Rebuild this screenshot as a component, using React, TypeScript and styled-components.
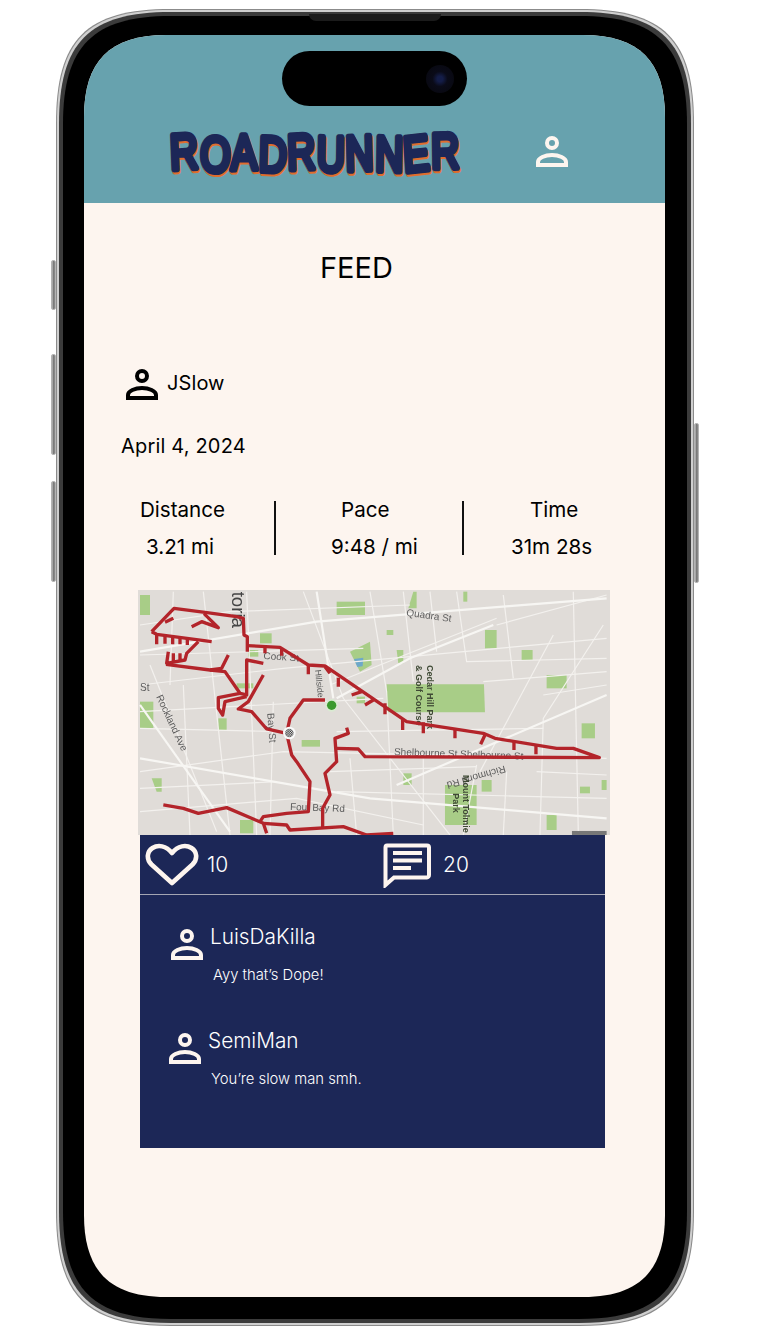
import styled, { createGlobalStyle } from 'styled-components';

const GlobalStyle = createGlobalStyle`
  html, body {
    margin: 0;
    padding: 0;
    background: #fff;
    font-family: "Inter", "Liberation Sans", sans-serif;
  }
  body {
    width: 778px;
    height: 1336px;
    overflow: hidden;
  }
`;

// rounded rect whose corners ease in slowly, like the device mockup (c pulls the curve towards the corner)
const squircle = (x: number, y: number, w: number, h: number, r: number, c: number) => {
  const R = x + w;
  const B = y + h;
  return [
    `M${x} ${y + r}C${x} ${y + c} ${x + c} ${y} ${x + r} ${y}`,
    `H${R - r}C${R - c} ${y} ${R} ${y + c} ${R} ${y + r}`,
    `V${B - r}C${R} ${B - c} ${R - c} ${B} ${R - r} ${B}`,
    `H${x + r}C${x + c} ${B} ${x} ${B - c} ${x} ${B - r}Z`,
  ].join('');
};

const PHONE_W = 638;
const PHONE_H = 1317;

// Device frame
const Page = styled.div`
  width: 778px;
  height: 1336px;
  padding: 9px 0 0 56px;
  box-sizing: border-box;
`;

const Phone = styled.div`
  position: relative;
  width: ${PHONE_W}px;
  height: ${PHONE_H}px;
  box-sizing: border-box;
  padding: 26px 29px 29px 28px;
`;

const FrameArt = styled.svg`
  position: absolute;
  top: 0;
  left: 0;
`;

const SideButton = styled.div<{ $side: 'left' | 'right'; $top: number; $height: number }>`
  position: absolute;
  ${p => p.$side}: -5px;
  top: ${p => p.$top}px;
  width: 5px;
  height: ${p => p.$height}px;
  background: linear-gradient(90deg, #bdbdbd, #6d6d6d 60%, #9a9a9a);
  border: 1px solid #b4b4b4;
  border-radius: 2px;
  box-sizing: border-box;
`;

const Speaker = styled.div`
  position: absolute;
  top: 5px;
  left: 253px;
  width: 132px;
  height: 7px;
  background: #1b1b1b;
  border-radius: 0 0 8px 8px;
`;

const Screen = styled.div`
  position: relative;
  height: 100%;
  background: #fdf5ef;
  clip-path: path('${squircle(0, 0, 581, 1262, 82, 26)}');
`;

const Island = styled.div`
  position: absolute;
  top: 16px;
  left: 198px;
  width: 185px;
  height: 55px;
  display: flex;
  align-items: center;
  justify-content: flex-end;
  padding-right: 13px;
  box-sizing: border-box;
  background: #000;
  border-radius: 28px;
`;

const Lens = styled.div`
  width: 28px;
  height: 28px;
  border-radius: 50%;
  background: radial-gradient(circle, #141d48 0 14%, #0a0b18 38%, #07070d 100%);
`;

// Header
const Header = styled.header`
  height: 168px;
  box-sizing: border-box;
  padding: 91px 0 23px 84px;
  display: flex;
  align-items: center;
  background: #67a2ae;
`;

const LogoArt = styled.svg`
  display: block;
  flex: none;
  overflow: visible;
`;

const HeaderAction = styled.div`
  margin-left: 71px;
  padding-bottom: 6px;
  display: flex;
`;

// Feed
const Feed = styled.main`
  display: flex;
  flex-direction: column;
`;

const Title = styled.h1`
  margin: 48px 0 0 236px;
  font-size: 29px;
  line-height: 33px;
  font-weight: 400;
  color: #000;
`;

const Author = styled.div`
  margin: 81px 0 0 41px;
  height: 36px;
  display: flex;
  align-items: center;
  gap: 8px;
  font-size: 20px;
  letter-spacing: 0.1px;
  color: #000;
`;

const PostDate = styled.div`
  margin: 33px 0 0 37px;
  font-size: 20px;
  letter-spacing: 0.18px;
  line-height: 24px;
  color: #000;
`;

const Stats = styled.div`
  margin-top: 40px;
  display: flex;
  align-items: center;
  height: 60px;
`;

const Stat = styled.div<{ $width: number }>`
  width: ${p => p.$width}px;
  display: flex;
  flex-direction: column;
  gap: 13px;
  font-size: 20.6px;
  line-height: 24px;
  color: #000;
`;

const StatText = styled.span<{ $inset: number }>`
  padding-left: ${p => p.$inset}px;
`;

const StatDivider = styled.div`
  width: 2px;
  height: 54px;
  background: #111;
`;

const MapFrame = styled.div`
  margin: 32px 0 0 54px;
  width: 472px;
  height: 245px;
  background: #e0dcd8;
  overflow: hidden;
`;

const MapSvg = styled.svg`
  display: block;
  filter: blur(0.55px);
`;

const Panel = styled.section`
  margin-left: 56px;
  width: 465px;
  height: 313px;
  background: #1c2757;
  color: #fff;
`;

const Actions = styled.div`
  height: 60px;
  box-sizing: border-box;
  display: flex;
  border-bottom: 1px solid #a3a5b3;
`;

const Action = styled.div<{ $width: number; $inset: number; $gap: number }>`
  width: ${p => p.$width}px;
  padding-left: ${p => p.$inset}px;
  box-sizing: border-box;
  display: flex;
  align-items: center;
  gap: ${p => p.$gap}px;
  font-size: 21px;
  font-weight: 300;
`;

const Comment = styled.div<{ $top: number; $inset: number }>`
  margin: ${p => p.$top}px 0 0 ${p => p.$inset}px;
  display: grid;
  grid-template-columns: 34px 1fr;
  grid-template-rows: 24px auto;
  column-gap: 6px;
  row-gap: 18px;
`;

const CommentIcon = styled.div`
  grid-row: 1 / span 2;
  padding-top: 1px;
`;

const CommentName = styled.div`
  font-size: 20.8px;
  font-weight: 300;
  line-height: 24px;
`;

const CommentBody = styled.div`
  grid-column: 2;
  margin-left: 3px;
  font-size: 14.8px;
  font-weight: 300;
  line-height: 17px;
`;

const PersonIcon = ({ size = 34, color = '#000' }: { size?: number; color?: string }) => (
  <svg width={size} height={size} viewBox="0 0 34 34" fill="none" stroke={color} strokeWidth="4">
    <circle cx="17" cy="10" r="5" />
    <path d="M3 32V29C3 25 10 22 17 22S31 25 31 29V32Z" />
  </svg>
);

const HeartIcon = () => (
  <svg width="54" height="44" viewBox="0 0 54 44" fill="none" stroke="#fdf5ef" strokeWidth="4.6">
    <path d="M27 40L6.5 21.5C1 16 2 8.5 7.5 5C13 1.5 21 2.5 27 10C33 2.5 41 1.5 46.5 5C52 8.5 53 16 47.5 21.5Z" strokeLinejoin="round" />
  </svg>
);

const ChatIcon = () => (
  <svg width="48" height="46" viewBox="0 0 48 46" fill="none">
    <path d="M4 3.5H44C45.5 3.5 46 4.5 46 5.5V33C46 34.5 45 35.5 44 35.5H11L2.5 43V5.5C2.5 4.5 3 3.5 4 3.5Z" stroke="#fdf5ef" strokeWidth="4" />
    <path d="M10 11H39M10 18.5H39M10 26H28" stroke="#fdf5ef" strokeWidth="4.2" />
  </svg>
);

const LOGO_TILT = '-3 2 -1 2 -2 1 -2 1 -5 -1';
const LOGO_LIFT = '0 1 -1 1 -1 1 0 0 1 -3';

// brush lettering: the same text twice, orange under navy
const Logo = () => (
  <LogoArt width="296" height="54" viewBox="0 -4 296 54" fontFamily="'Liberation Sans', sans-serif" fontSize="39">
    <g strokeLinejoin="round" strokeLinecap="round" strokeWidth="4.6" transform="scale(1 1.28)">
      <text x="3.5" y="32.6" dy={LOGO_LIFT} rotate={LOGO_TILT} textLength="289" fill="#df6d2d" stroke="#df6d2d">ROADRUNNER</text>
      <text x="2.5" y="31" dy={LOGO_LIFT} rotate={LOGO_TILT} textLength="289" fill="#1c2757" stroke="#1c2757">ROADRUNNER</text>
    </g>
  </LogoArt>
);

// road network and parks, coordinates taken from the 3x crop of the map
const minorRoads = [
  'M30 300L460 250L1430 160', 'M30 560L460 500L1430 520', 'M30 120L300 80L840 60', 'M220 20L300 750',
  'M520 20L640 340L960 750', 'M720 20L770 320L790 750', 'M980 20L1010 230L1430 220', 'M30 430L450 440',
  'M620 620L1430 640', 'M1230 750L1240 400L1420 120', 'M1050 560L1270 150', 'M60 240L260 740',
  'M430 350L420 750', 'M30 680L500 640L880 720', 'M1100 120L1430 30', 'M600 300L1100 100',
  'M1040 540L1000 750', 'M130 20L120 300', 'M900 20L920 200', 'M1130 560L1120 750',
  'M30 210L700 190', 'M30 380L760 340', 'M30 610L440 590', 'M620 440L1240 430', 'M820 20L850 290',
  'M1330 20L1345 740', 'M1120 30L1150 280', 'M350 20L380 750', 'M660 520L680 750', 'M880 520V750',
  'M1220 560L1430 570', 'M160 300L180 750', 'M1240 330L1430 300', 'M600 560L1040 545', 'M1060 290L1430 260',
];

const majorRoads = [
  'M30 200L560 110L1430 40', 'M560 20L610 340', 'M30 520L720 640L1430 700', 'M620 340L840 220L1090 120',
  'M800 600L1430 330', 'M30 360L300 740',
];

const parks = [
  'M770 298H1062L1065 382H770Z', 'M620 50H705V90H620Z', 'M660 200L720 170L725 240L690 260Z', 'M1065 135H1100V190H1065Z',
  'M945 600H1040V720H945Z', 'M1250 270H1310V310H1250Z', 'M1175 195H1208V225H1175Z', 'M850 20H860V70H835Z',
  'M390 145H425V175H390Z', 'M30 350H70V430H30Z', 'M515 465H570V485H515Z', 'M1355 415H1395V460H1355Z',
  'M1055 585H1085V620H1055Z', 'M1250 690H1280V735H1250Z', 'M1350 605H1380V625H1350Z', 'M330 705H370V745H330Z',
  'M30 30H60V90H30Z', 'M265 400H290V435H265Z', 'M820 565H845V600H820Z', 'M1415 585H1430V615H1415Z',
  'M800 195H820V235H805Z', 'M355 195H385V215H355Z', 'M320 295H370V310H320Z', 'M770 135H790V150H770Z',
  'M1000 20H1012V50H1000Z', 'M65 580H95V620H80Z', 'M680 335H705V355H680Z',
];

const routes = [
  'M65 140L132 70L225 82L320 95L340 100L342 150L352 155L352 200',
  'M65 140L80 148L245 170',
  'M80 148V178M105 152V176M128 155V178M150 158V178M172 160V180',
  'M105 112L130 100M185 125L215 110L265 128L222 86',
  'M205 170L170 205L165 225L110 235L115 200M130 205V228M150 205V225',
  'M108 238L240 255L275 250L295 210',
  'M240 255L285 260L330 325L350 330L350 225L400 235',
  'M352 182L450 187L535 240L585 243L830 410L1060 445L1095 460L1280 490L1330 490L1408 518L705 515L685 492L620 490',
  'M405 185V205M455 190V212M535 240V268M585 245L600 265M625 278V305M665 330L695 320M705 360L730 345M765 355V388M818 405V435M880 412V445M975 430V460M1065 450L1052 478M1152 470V495M1218 480V508',
  'M330 325L265 338L265 370L278 390L285 350L350 335',
  'M400 270L355 350L325 372L365 380L410 432L470 445L480 400L520 345L585 345',
  'M470 445L485 510L500 530L540 590L535 680L470 685L400 695L390 710',
  'M650 428L655 445L615 460L620 530L585 565L600 630L578 670V730',
  'M100 660L160 670L205 685L290 668L400 715L410 745',
  'M400 715L470 720L480 735L640 725L710 750L790 745',
];

const MapDrawing = () => (
  <MapSvg width="472" height="245" viewBox="0 0 472 245" fontFamily="'Liberation Sans', sans-serif" fill="#5d5d5d">
    <defs>
      <pattern id="finish" width="7" height="7" patternUnits="userSpaceOnUse">
        <rect width="7" height="7" fill="#f4f4f4" />
        <rect width="3.5" height="3.5" fill="#222" />
        <rect x="3.5" y="3.5" width="3.5" height="3.5" fill="#222" />
      </pattern>
    </defs>
    <g transform="translate(-8 -5) scale(0.3333)">
      {parks.map(d => (
        <path key={d} d={d} fill="#a8cd87" />
      ))}
      <path d="M672 222L700 218L698 244L682 246Z" fill="#6ea8c9" />
      <g fill="none" stroke="#f3f1ee">
        {minorRoads.map(d => (
          <path key={d} d={d} strokeWidth="3.5" />
        ))}
        {majorRoads.map(d => (
          <path key={d} d={d} strokeWidth="6.5" stroke="#f7f6f3" />
        ))}
      </g>
      <g fontSize="30">
        <text x="305" y="20" fontSize="56" fill="#444" transform="rotate(90 305 20)">toria</text>
        <text x="828" y="92" transform="rotate(8 828 92)">Quadra St</text>
        <text x="400" y="222" transform="rotate(4 400 222)">Cook St</text>
        <text x="555" y="255" fontSize="26" transform="rotate(84 555 255)">Hillside</text>
        <text x="30" y="318">St</text>
        <text x="78" y="335" transform="rotate(65 78 335)">Rockland Ave</text>
        <text x="412" y="385" transform="rotate(86 412 385)">Bay St</text>
        <text x="792" y="510" transform="rotate(2 792 510)">Shelbourne St Shelbourne St</text>
        <text x="955" y="590" transform="rotate(164 955 590) translate(-175 0)">Richmond Rd</text>
        <text x="480" y="675" transform="rotate(2 480 675)">Foul Bay Rd</text>
      </g>
      <g fontSize="27" fontWeight="700" fill="#3f4a35">
        <text x="890" y="240" transform="rotate(90 890 240)">Cedar Hill Park</text>
        <text x="858" y="240" transform="rotate(90 858 240)">&amp; Golf Course</text>
        <text x="1000" y="570" transform="rotate(90 1000 570)">Mount Tolmie</text>
        <text x="968" y="625" transform="rotate(90 968 625)">Park</text>
      </g>
      <g fill="none" stroke="#b3242a" strokeWidth="10" strokeLinejoin="round">
        {routes.map(d => (
          <path key={d} d={d} />
        ))}
      </g>
      <circle cx="605" cy="361" r="19" fill="#d9ead2" />
      <circle cx="605" cy="361" r="14" fill="#3b9a2e" />
      <circle cx="478" cy="444" r="19" fill="#fafafa" />
      <circle cx="478" cy="444" r="13" fill="url(#finish)" />
      <rect x="1326" y="738" width="104" height="12" fill="#777" />
    </g>
  </MapSvg>
);

export default function App() {
  return (
    <>
      <GlobalStyle />
      <Page>
        <Phone>
          <FrameArt width={PHONE_W} height={PHONE_H} viewBox={`0 0 ${PHONE_W} ${PHONE_H}`}>
            <path d={squircle(0, 0, PHONE_W, PHONE_H, 115, 30)} fill="#8b8b8b" />
            <path d={squircle(1, 1, PHONE_W - 2, PHONE_H - 2, 114, 30)} fill="#cfcfcf" />
            <path d={squircle(3, 3, PHONE_W - 6, PHONE_H - 6, 112, 30)} fill="#3b3b3b" />
            <path d={squircle(7, 7, PHONE_W - 14, PHONE_H - 14, 108, 30)} fill="#000" />
          </FrameArt>
          <SideButton $side="left" $top={251} $height={50} />
          <SideButton $side="left" $top={345} $height={101} />
          <SideButton $side="left" $top={472} $height={101} />
          <SideButton $side="right" $top={414} $height={160} />
          <Speaker />
          <Screen>
            <Header>
              <Logo />
              <HeaderAction>
                <PersonIcon color="#fdf5ef" />
              </HeaderAction>
            </Header>
            <Island>
              <Lens />
            </Island>
            <Feed>
              <Title>FEED</Title>
              <Author>
                <PersonIcon />
                JSlow
              </Author>
              <PostDate>April 4, 2024</PostDate>
              <Stats>
                <Stat $width={190}>
                  <StatText $inset={56}>Distance</StatText>
                  <StatText $inset={62}>3.21 mi</StatText>
                </Stat>
                <StatDivider />
                <Stat $width={186}>
                  <StatText $inset={65}>Pace</StatText>
                  <StatText $inset={55}>9:48 / mi</StatText>
                </Stat>
                <StatDivider />
                <Stat $width={200}>
                  <StatText $inset={66}>Time</StatText>
                  <StatText $inset={47}>31m 28s</StatText>
                </Stat>
              </Stats>
              <MapFrame>
                <MapDrawing />
              </MapFrame>
              <Panel>
                <Actions>
                  <Action $width={243} $inset={5} $gap={8}>
                    <HeartIcon />
                    10
                  </Action>
                  <Action $width={222} $inset={0} $gap={12}>
                    <ChatIcon />
                    20
                  </Action>
                </Actions>
                <Comment $top={30} $inset={30}>
                  <CommentIcon>
                    <PersonIcon color="#fdf5ef" />
                  </CommentIcon>
                  <CommentName>LuisDaKilla</CommentName>
                  <CommentBody>Ayy that’s Dope!</CommentBody>
                </Comment>
                <Comment $top={45} $inset={28}>
                  <CommentIcon>
                    <PersonIcon color="#fdf5ef" />
                  </CommentIcon>
                  <CommentName>SemiMan</CommentName>
                  <CommentBody>You’re slow man smh.</CommentBody>
                </Comment>
              </Panel>
            </Feed>
          </Screen>
        </Phone>
      </Page>
    </>
  );
}
